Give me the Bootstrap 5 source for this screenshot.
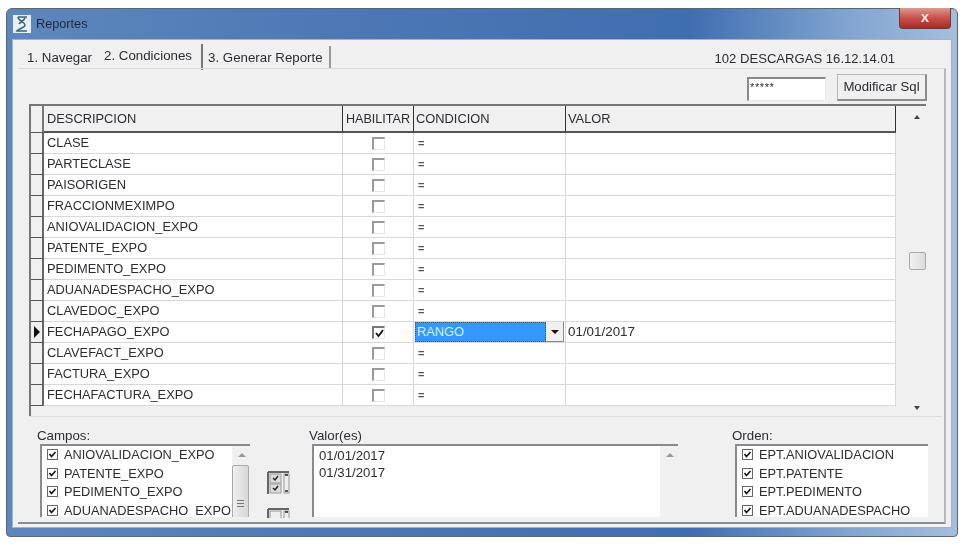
<!DOCTYPE html>
<html lang="es"><head><meta charset="utf-8"><title>Reportes</title>
<link href="https://cdn.jsdelivr.net/npm/bootstrap@5.3.0/dist/css/bootstrap.min.css" rel="stylesheet">
<style>
html,body{height:100%;overflow:hidden;background:#fff}
body{font-family:"Liberation Sans",Arial,sans-serif;font-size:12.8px;color:#2c2c33;line-height:1.2}
.win{width:952px;height:529px;margin:8px 0 0 6px;border:1px solid #5a6672;border-radius:6px 6px 4px 4px;background:linear-gradient(90deg,#5e87bd 0,#4d78b4 35%,#3f6eb0 72%,#7fa3d0 88%,#a6bedd 100%);padding:0 5px 8px;display:flex;flex-direction:column;filter:blur(.45px)}
.tbar{height:30px;flex:none}
.ticon{width:18px;height:18px;background:#e9eef2;margin-left:1px;margin-right:5px}
.ttl{font-size:12.7px;color:#1d2a3c;padding-top:2px}
.closex{width:52px;height:21px;margin-top:-1px;margin-right:1px;border:1px solid #6e3a36;border-top:0;border-radius:0 0 4px 4px;background:linear-gradient(#dc9a90,#c9504a 50%,#a82a24);color:#e8e8e8;font-weight:700;font-size:15px;line-height:17px;text-align:center}
.client{flex:1;min-height:0;background:#f0f0f0;border:1px solid #aab2bc;display:flex;flex-direction:column}
.tabrow{height:28px;flex:none;padding-left:9px}
.tb{color:#2c2c33;height:24px;line-height:24px;font-size:13.3px;white-space:nowrap}
.tb1{padding:0 6px 0 5px;margin-top:6px}
.tb2{padding:0 9px 0 6px;margin-top:4px;height:26px;border-right:2px solid #777}
.tb3{padding:0 6px 0 5px;margin-top:6px;height:22px;border-right:2px solid #999}
.ver{margin-right:56px;margin-top:11px;font-size:13.1px}
.panel{flex:1;min-height:0;border-top:1px solid #ddd;border-right:2px solid #b8b8b8;border-bottom:2px solid #8c8c8c;margin:0 5px 3px 5px;display:flex;flex-direction:column;padding:0 0 0 11px}
.tools{height:35px;flex:none;padding-right:17px;padding-top:5px}
.pw{width:79px;height:24px;margin-top:3px;margin-right:11px;background:#fff;border:2px solid #8a8a8a;border-right:1px solid #e8e8e8;border-bottom:1px solid #e8e8e8;font-size:11px;line-height:16px;padding-left:1px;letter-spacing:.6px}
.mod{width:90px;height:27px;border:1px solid #b8b8b8;border-right:2px solid #8c8c8c;border-bottom:2px solid #8c8c8c;background:#f0f0f0;font-size:13.2px;line-height:24px;text-align:center;color:#2c2c33}
.gridbox{height:312px;width:897px;flex:none;border-top:2px solid #777;border-left:2px solid #777;display:flex}
.gtable{table-layout:fixed;width:865px;flex:none;align-self:flex-start;margin:0;border-collapse:separate;border-spacing:0;--bs-table-bg:#fff;color:#2c2c33}
.gtable th,.gtable td{padding:0 0 0 2px;border:0;border-right:1px solid #d8d8d8;border-bottom:1px solid #d8d8d8;height:21px;font-weight:400;font-size:12.85px;line-height:20px;white-space:nowrap;overflow:hidden;box-shadow:none;color:#2c2c33;vertical-align:middle}
.gtable th:nth-child(2),.gtable td:nth-child(2){padding-left:3px}
.gtable td:nth-child(3){padding-left:0}
.gtable thead th{height:27px;background:#f0f0f0;border-right:1px solid #333;border-bottom:2px solid #555}
.gtable .ind{background:#f0f0f0;border-right:2px solid #666;border-bottom:1px solid #555;padding:0;text-align:center}
.gtable thead .ind{border-right:2px solid #777}
.gtable .hab{font-size:12.6px}
.ck{display:block;width:13px;height:13px;margin:0 auto;background:#fff;border:2px solid #9a9a9a;border-right:1px solid #e6e6e6;border-bottom:1px solid #e6e6e6}
.ck.chk{border-color:#777 #e6e6e6 #e6e6e6 #777}
.ck svg{display:block}
.gtable .eq{font-size:11px;font-weight:700;color:#555;padding:0 0 0 4px}
.gtable .dt{font-size:13.4px}
.sel{position:relative;background:#3399ff;color:#d9edff;outline:1px dotted #7a4a10;outline-offset:-1px;height:20px;margin:0;padding-left:2px;width:131px}
.dd{position:absolute;left:131px;top:0;width:18px;height:20px;background:#f0f0f0;border-right:1px solid #888;border-bottom:1px solid #888}
.dd i{position:absolute;left:5px;top:8px;width:0;height:0;border:4px solid transparent;border-top:4px solid #111;border-bottom:0}
.gtable .cond-cell{overflow:visible;padding-left:1px}
.gscroll{flex:1;position:relative;background:#f0f0f0;min-width:0}
.gscroll .up,.gscroll .dn{position:absolute;left:18px;width:0;height:0;border:3px solid transparent}
.gscroll .up{top:9px;border-bottom:4px solid #444;border-top:0}
.gscroll .dn{bottom:6px;border-top:4px solid #444;border-bottom:0}
.thumb{position:absolute;left:13px;top:146px;width:17px;height:18px;background:linear-gradient(90deg,#f2f2f2,#dcdcdc);border:1px solid #aaa;border-radius:2px}
.bottom{flex:1;min-height:0;padding-top:12px;padding-left:11px;overflow:hidden;border-top:1px solid #ddd;width:913px}
.lbl{height:14px;font-size:13.3px;line-height:14px;margin-left:-3px}
.lst{height:73px;background:#fff;border-top:2px solid #8a8a8a;border-left:2px solid #8a8a8a;overflow:hidden;position:relative;margin-top:1px}
.ln{height:18.6px;line-height:18.6px;white-space:nowrap;padding-left:5px;font-size:12.8px}
.cb{display:inline-block;width:11px;height:11px;border:1px solid #666;background:#fff;vertical-align:-1px;margin-right:6px;position:relative}
.cb svg{position:absolute;left:0;top:0}
.c1{width:210px}.c2{width:366px}.c3{width:193px;margin-left:57px}
.mini{width:62px;height:89px;overflow:hidden;padding-left:17px;padding-top:42px}
.icn{display:block;width:24px;height:24px}
.icn2{margin-top:13px}
.vsb{position:absolute;right:0;top:0;bottom:0;width:18px;background:#f0f0f0}
.vsb .up{position:absolute;left:6px;top:7px;width:0;height:0;border:4px solid transparent;border-bottom:4px solid #999;border-top:0}
.vth{position:absolute;left:0;top:19px;width:17px;height:70px;background:linear-gradient(90deg,#efefef,#d6d6d6);border:1px solid #aaa;border-radius:2px}
.vth b{position:absolute;left:4px;top:34px;width:7px;height:7px;border-top:1px solid #777;border-bottom:1px solid #777}
.vth b::after{content:"";position:absolute;left:0;right:0;top:2px;height:1px;background:#777}
.stack{display:flex;flex-direction:column;padding:1px 0 0 5px}
.fline{font-size:13.2px;line-height:17px}
</style></head><body>
<div class="win">
 <div class="tbar d-flex align-items-center">
  <svg class="ticon flex-none" viewBox="0 0 18 18"><path d="M5 2h9M5 2c0 4 7 5 7 8s-6 3-8 6h10M12 3c-1 3-5 4-6 6" fill="none" stroke="#2f6a78" stroke-width="1.6"/></svg>
  <span class="ttl">Reportes</span>
  <div class="closex ms-auto align-self-start">x</div>
 </div>
 <div class="client">
  <div class="tabrow d-flex">
   <span class="tb tb1">1. Navegar</span>
   <span class="tb tb2">2. Condiciones</span>
   <span class="tb tb3">3. Generar Reporte</span>
   <span class="ver ms-auto">102 DESCARGAS 16.12.14.01</span>
  </div>
  <div class="panel">
   <div class="tools d-flex justify-content-end">
    <div class="pw">*****</div>
    <div class="mod">Modificar Sql</div>
   </div>
   <div class="gridbox">
    <table class="table gtable">
     <colgroup><col style="width:13px"><col style="width:299px"><col style="width:71px"><col style="width:152px"><col style="width:330px"></colgroup>
     <thead><tr><th class="ind"></th><th>DESCRIPCION</th><th class="text-center px-0 hab">HABILITAR</th><th>CONDICION</th><th>VALOR</th></tr></thead>
     <tbody>
      <tr><td class="ind"></td><td>CLASE</td><td><span class="ck"></span></td><td class="eq">=</td><td></td></tr>
      <tr><td class="ind"></td><td>PARTECLASE</td><td><span class="ck"></span></td><td class="eq">=</td><td></td></tr>
      <tr><td class="ind"></td><td>PAISORIGEN</td><td><span class="ck"></span></td><td class="eq">=</td><td></td></tr>
      <tr><td class="ind"></td><td>FRACCIONMEXIMPO</td><td><span class="ck"></span></td><td class="eq">=</td><td></td></tr>
      <tr><td class="ind"></td><td>ANIOVALIDACION_EXPO</td><td><span class="ck"></span></td><td class="eq">=</td><td></td></tr>
      <tr><td class="ind"></td><td>PATENTE_EXPO</td><td><span class="ck"></span></td><td class="eq">=</td><td></td></tr>
      <tr><td class="ind"></td><td>PEDIMENTO_EXPO</td><td><span class="ck"></span></td><td class="eq">=</td><td></td></tr>
      <tr><td class="ind"></td><td>ADUANADESPACHO_EXPO</td><td><span class="ck"></span></td><td class="eq">=</td><td></td></tr>
      <tr><td class="ind"></td><td>CLAVEDOC_EXPO</td><td><span class="ck"></span></td><td class="eq">=</td><td></td></tr>
      <tr><td class="ind"><svg width="8" height="12" viewBox="0 0 8 12" class="d-block mx-auto"><path d="M1 0l6 6-6 6z" fill="#111"/></svg></td><td>FECHAPAGO_EXPO</td><td><span class="ck chk"><svg width="11" height="11" viewBox="0 0 11 11"><path d="M2 5l2.5 3L9 2" fill="none" stroke="#111" stroke-width="1.8"/></svg></span></td><td class="cond-cell"><div class="sel">RANGO<span class="dd"><i></i></span></div></td><td class="dt">01/01/2017</td></tr>
      <tr><td class="ind"></td><td>CLAVEFACT_EXPO</td><td><span class="ck"></span></td><td class="eq">=</td><td></td></tr>
      <tr><td class="ind"></td><td>FACTURA_EXPO</td><td><span class="ck"></span></td><td class="eq">=</td><td></td></tr>
      <tr><td class="ind"></td><td>FECHAFACTURA_EXPO</td><td><span class="ck"></span></td><td class="eq">=</td><td></td></tr>
     </tbody>
    </table>
    <div class="gscroll"><i class="up"></i><span class="thumb"></span><i class="dn"></i></div>
   </div>
   <div class="bottom d-flex">
    <div class="c1"><div class="lbl">Campos:</div><div class="lst">
      <div class="ln"><span class="cb"><svg width="9" height="9" viewBox="0 0 9 9"><path d="M1.5 4l2 2.5L7.5 2" fill="none" stroke="#111" stroke-width="1.6"/></svg></span>ANIOVALIDACION_EXPO</div>
      <div class="ln"><span class="cb"><svg width="9" height="9" viewBox="0 0 9 9"><path d="M1.5 4l2 2.5L7.5 2" fill="none" stroke="#111" stroke-width="1.6"/></svg></span>PATENTE_EXPO</div>
      <div class="ln"><span class="cb"><svg width="9" height="9" viewBox="0 0 9 9"><path d="M1.5 4l2 2.5L7.5 2" fill="none" stroke="#111" stroke-width="1.6"/></svg></span>PEDIMENTO_EXPO</div>
      <div class="ln"><span class="cb"><svg width="9" height="9" viewBox="0 0 9 9"><path d="M1.5 4l2 2.5L7.5 2" fill="none" stroke="#111" stroke-width="1.6"/></svg></span>ADUANADESPACHO_EXPO</div>
      <div class="vsb"><i class="up"></i><div class="vth"><b></b></div></div>
    </div></div>
    <div class="mini">
     <svg class="icn" viewBox="0 0 24 24"><path d="M1 1h21M1 1v22" stroke="#666" stroke-width="2" fill="none"/><rect x="3" y="3" width="11" height="9" fill="#ddd" stroke="#999"/><rect x="3" y="13" width="11" height="9" fill="#ddd" stroke="#999"/><path d="M6 7l2 2 3-4M6 17l2 2 3-4" stroke="#222" stroke-width="1.4" fill="none"/><rect x="17" y="3" width="5" height="19" fill="#eee" stroke="#999"/><path d="M18 4h3M18 20h3" stroke="#222" stroke-width="1.5"/></svg>
     <svg class="icn icn2" viewBox="0 0 24 24"><path d="M1 1h21M1 1v22" stroke="#666" stroke-width="2" fill="none"/><rect x="3" y="3" width="11" height="9" fill="#eee" stroke="#999"/><rect x="17" y="3" width="5" height="19" fill="#eee" stroke="#999"/><path d="M18 4h3" stroke="#222" stroke-width="1.5"/></svg>
    </div>
    <div class="c2"><div class="lbl">Valor(es)</div><div class="lst"><div class="stack"><span class="fline">01/01/2017</span><span class="fline">01/31/2017</span></div><div class="vsb"><i class="up"></i></div></div></div>
    <div class="c3"><div class="lbl">Orden:</div><div class="lst">
      <div class="ln"><span class="cb"><svg width="9" height="9" viewBox="0 0 9 9"><path d="M1.5 4l2 2.5L7.5 2" fill="none" stroke="#111" stroke-width="1.6"/></svg></span>EPT.ANIOVALIDACION</div>
      <div class="ln"><span class="cb"><svg width="9" height="9" viewBox="0 0 9 9"><path d="M1.5 4l2 2.5L7.5 2" fill="none" stroke="#111" stroke-width="1.6"/></svg></span>EPT.PATENTE</div>
      <div class="ln"><span class="cb"><svg width="9" height="9" viewBox="0 0 9 9"><path d="M1.5 4l2 2.5L7.5 2" fill="none" stroke="#111" stroke-width="1.6"/></svg></span>EPT.PEDIMENTO</div>
      <div class="ln"><span class="cb"><svg width="9" height="9" viewBox="0 0 9 9"><path d="M1.5 4l2 2.5L7.5 2" fill="none" stroke="#111" stroke-width="1.6"/></svg></span>EPT.ADUANADESPACHO</div>
    </div></div>
   </div>
  </div>
 </div>
</div>
<script src="https://cdn.jsdelivr.net/npm/bootstrap@5.3.0/dist/js/bootstrap.bundle.min.js"></script>
</body></html>
